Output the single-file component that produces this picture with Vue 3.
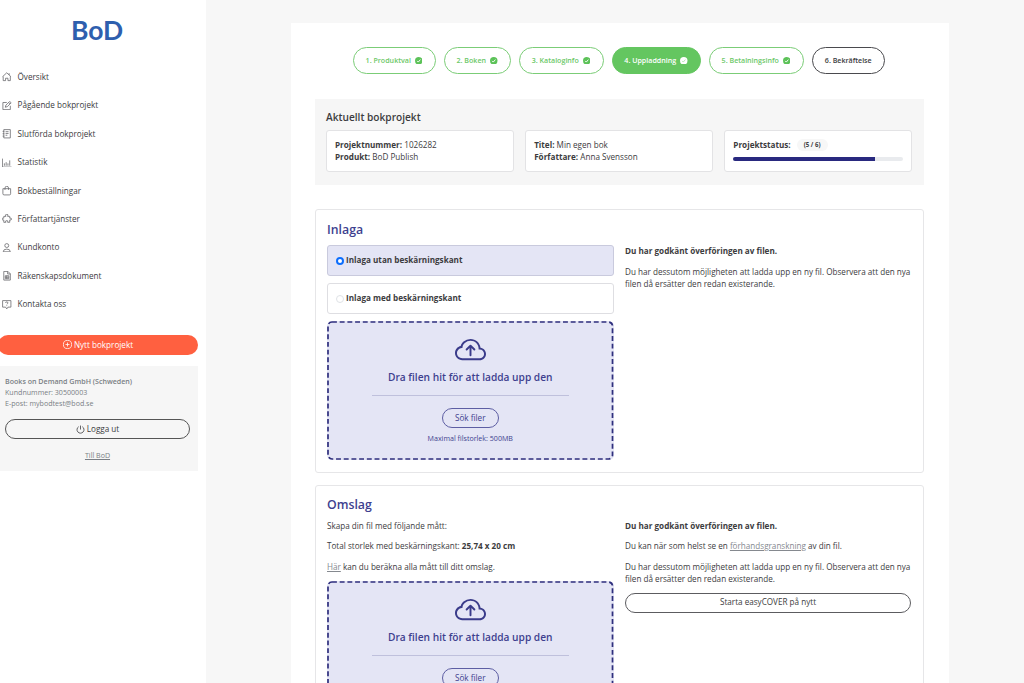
<script setup>
import { ref } from 'vue'

const menu = [
  { title: 'Översikt', icon: ['M2 7.5V14.5H6V10.5H10V14.5H14V7.5', 'M.8 8 8 1.3 15.2 8', 'M12 2v3'] },
  { title: 'Pågående bokprojekt', icon: ['M14 8v6.5H1.5V2.5H8', 'M5.5 10.5 6.5 7 13 .8 15.4 3 9 9.5Z', 'M11.3 2.5 13.7 5'] },
  { title: 'Slutförda bokprojekt', icon: ['M3 1h11v14H3Z', 'M1 4h3M1 8h3M1 12h3', 'M6 4.5h5M6 7.5h5M6 10.5h3'] },
  { title: 'Statistik', icon: ['M.7 1v14.3H16', 'M4 13V9M7 13V7M10 13V9M13 13V4'] },
  { title: 'Bokbeställningar', icon: ['M1.5 4.5h13V13q0 2-2 2h-9q-2 0-2-2Z', 'M5 6.5V3.5q0-3 3-3t3 3v3'] },
  { title: 'Författartjänster', icon: ['M3 4h3.5q-2-3.5 1.5-3.5T9.5 4H13v3q3-1 3 1.5T13 10v4H9.5q1.5-3-1.5-3t-1.5 3H3v-4Q0 11 0 8.5T3 7Z'] },
  { title: 'Kundkonto', icon: ['M8 1a3.3 3.3 0 1 1 0 6.6A3.3 3.3 0 1 1 8 1Z', 'M2 14.8q0-4.5 6-4.5t6 4.5Z'] },
  { title: 'Räkenskapsdokument', icon: ['M3 .7h7l4 4v10.6H3Z', 'M9.5 1v4H14', 'M5.5 8h6v5h-6ZM5.5 10.5h6M8 8v5'] },
  { title: 'Kontakta oss', icon: ['M1 1h14v11H10l-2 3-2-3H1Z', 'M6 5q0-1.8 2-1.8T10 5q0 1-2 2.2', 'M8 9v1.3'] }
]

const steps = [
  { title: '1. Produktval', state: 'done' },
  { title: '2. Boken', state: 'done' },
  { title: '3. Kataloginfo', state: 'done' },
  { title: '4. Uppladdning', state: 'active' },
  { title: '5. Betalningsinfo', state: 'done' },
  { title: '6. Bekräftelse', state: 'open' }
]

const sections = [
  { id: 'inlaga', title: 'Inlaga' },
  { id: 'omslag', title: 'Omslag' }
]

const trimOptions = [
  { value: 'utan', label: 'Inlaga utan beskärningskant' },
  { value: 'med', label: 'Inlaga med beskärningskant' }
]
const trim = ref('utan')
const progress = { current: 5, total: 6 }
</script>

<template>
  <div class="page">
    <aside class="sidebar">
      <div class="logo">BoD</div>

      <nav class="menu">
        <a v-for="item in menu" :key="item.title" class="menu-item">
          <svg class="menu-icon" viewBox="0 0 16 16">
            <path v-for="d in item.icon" :key="d" :d="d" />
          </svg>
          <span>{{ item.title }}</span>
        </a>
      </nav>

      <button class="new-btn">
        <svg viewBox="0 0 16 16"><circle cx="8" cy="8" r="7.3" /><path d="M8 4.5v7M4.5 8h7" /></svg>
        <span>Nytt bokprojekt</span>
      </button>

      <div class="account">
        <strong>Books on Demand GmbH (Schweden)</strong>
        <span>Kundnummer: 30500003</span>
        <span>E-post: mybodtest@bod.se</span>
        <button class="logout-btn">
          <svg viewBox="0 0 16 16"><path d="M8 1v7M4.8 3a6.2 6.2 0 1 0 6.4 0" /></svg>
          <span>Logga ut</span>
        </button>
        <a class="home-link">Till BoD</a>
      </div>
    </aside>

    <main class="content">
      <div class="steps">
        <div v-for="step in steps" :key="step.title" class="step" :class="step.state">
          <span>{{ step.title }}</span>
          <svg v-if="step.state !== 'open'" viewBox="0 0 16 16">
            <circle cx="8" cy="8" r="8" />
            <path d="M4.5 8.3 7 10.8 11.5 5.5" />
          </svg>
        </div>
      </div>

      <div class="project">
        <h3>Aktuellt bokprojekt</h3>
        <div class="project-cards">
          <div class="project-card">
            <div><b>Projektnummer:</b> 1026282</div>
            <div><b>Produkt:</b> BoD Publish</div>
          </div>
          <div class="project-card">
            <div><b>Titel:</b> Min egen bok</div>
            <div><b>Författare:</b> Anna Svensson</div>
          </div>
          <div class="project-card">
            <div class="status">
              <b>Projektstatus:</b>
              <span class="badge">({{ progress.current }} / {{ progress.total }})</span>
            </div>
            <div class="bar">
              <div class="bar-fill" :style="{ width: (progress.current / progress.total) * 100 + '%' }"></div>
            </div>
          </div>
        </div>
      </div>

      <section v-for="section in sections" :key="section.id" class="panel" :class="section.id">
        <div class="panel-left">
          <h2>{{ section.title }}</h2>

          <template v-if="section.id === 'inlaga'">
            <label
              v-for="option in trimOptions"
              :key="option.value"
              class="option"
              :class="{ selected: trim === option.value }"
            >
              <input v-model="trim" type="radio" :value="option.value" />
              <span>{{ option.label }}</span>
            </label>
          </template>
          <template v-else>
            <p>Skapa din fil med följande mått:</p>
            <p>Total storlek med beskärningskant: <b>25,74 x 20 cm</b></p>
            <p><a>Här</a> kan du beräkna alla mått till ditt omslag.</p>
          </template>

          <div class="upload">
            <svg class="outline"><rect x="1" y="1" width="284.5" height="137" rx="4" /></svg>
            <svg class="cloud" viewBox="0 0 16 16">
              <path d="M7.646 5.146a.5.5 0 0 1 .708 0l2 2a.5.5 0 0 1-.708.708L8.5 6.707V10.5a.5.5 0 0 1-1 0V6.707L6.354 7.854a.5.5 0 1 1-.708-.708l2-2z" />
              <path d="M4.406 3.342A5.53 5.53 0 0 1 8 2c2.69 0 4.923 2 5.166 4.579C14.758 6.804 16 8.137 16 9.773 16 11.569 14.502 13 12.687 13H3.781C1.708 13 0 11.366 0 9.318c0-1.763 1.266-3.223 2.942-3.593.143-.863.698-1.723 1.464-2.383zm.653.757c-.757.653-1.153 1.44-1.153 2.056v.448l-.445.049C2.064 6.805 1 7.952 1 9.318 1 10.785 2.23 12 3.781 12h8.906C13.98 12 15 10.988 15 9.773c0-1.216-1.02-2.228-2.313-2.228h-.5v-.5C12.188 4.825 10.328 3 8 3a4.53 4.53 0 0 0-2.941 1.1z" />
            </svg>
            <div class="upload-title">Dra filen hit för att ladda upp den</div>
            <div class="divider"></div>
            <button class="browse-btn">Sök filer</button>
            <div class="limit">Maximal filstorlek: 500MB</div>
          </div>
        </div>

        <div class="panel-right">
          <p><b>Du har godkänt överföringen av filen.</b></p>
          <p v-if="section.id === 'omslag'">Du kan när som helst se en <a>förhandsgranskning</a> av din fil.</p>
          <p>Du har dessutom möjligheten att ladda upp en ny fil. Observera att den nya<br />filen då ersätter den redan existerande.</p>
          <button v-if="section.id === 'omslag'" class="cover-btn">Starta easyCOVER på nytt</button>
        </div>
      </section>
    </main>
  </div>
</template>

<style>
body {
  margin: 0;
  overflow: hidden;
}
</style>

<style scoped>
* {
  box-sizing: border-box;
}

.page {
  display: flex;
  height: 683px;
  overflow: hidden;
  background: #f7f7f7;
  color: #3c3c3e;
  font-family: 'Open Sans', 'Liberation Sans', sans-serif;
  font-size: 8.13px;
  line-height: 12.4px;
  white-space: nowrap;
}

button {
  font: inherit;
  color: inherit;
  padding: 0;
  display: flex;
  align-items: center;
  justify-content: center;
}

svg {
  flex: none;
  fill: none;
  stroke: currentColor;
}

.sidebar {
  width: 206px;
  flex: none;
  background: #fff;
}

.logo {
  height: 63px;
  padding: 13px 0 0 71px;
  font-family: Lato, sans-serif;
  font-size: 26.5px;
  font-weight: 700;
  line-height: 34px;
  color: #2e5fae;
}

.menu-item {
  display: flex;
  align-items: center;
  gap: 6px;
  height: 28.4px;
  padding-left: 2px;
}

.menu-icon {
  width: 9.5px;
  height: 9.5px;
  stroke-width: 1.3;
  color: #66666a;
}

.new-btn {
  width: 200px;
  height: 20px;
  margin: 16.4px 0 11.5px -2px;
  border: none;
  border-radius: 10px;
  gap: 2px;
  background: #ff6040;
  color: #fff;
}

.new-btn svg,
.logout-btn svg {
  width: 9px;
  height: 9px;
  stroke-width: 1.4;
}

.account {
  display: flex;
  flex-direction: column;
  width: 198px;
  height: 104.5px;
  padding: 10px 8px 0 5px;
  background: #f6f6f6;
  color: #7a7f85;
  font-size: 7.1px;
  line-height: 10.8px;
}

.account strong {
  font-weight: 600;
}

.logout-btn {
  width: 185px;
  height: 20px;
  flex: none;
  margin-top: 10.5px;
  border: 1px solid #555;
  border-radius: 10px;
  gap: 2px;
  background: transparent;
  color: #3c3c3e;
  font-size: 8.13px;
}

.home-link {
  align-self: center;
  margin-top: 11px;
  text-decoration: underline;
}

.content {
  width: 658px;
  height: 1000px;
  flex: none;
  margin: 23px 0 0 85px;
  padding: 24px 25px 0 23.5px;
  background: #fff;
}

.steps {
  display: grid;
  grid-template-columns: 83px 67px 85px 89px 95px 73.5px;
  gap: 8px;
  justify-content: center;
  height: 27px;
  margin-right: 1px;
}

.step {
  display: flex;
  align-items: center;
  justify-content: center;
  gap: 4px;
  border: 1px solid #7bcd77;
  border-radius: 14px;
  color: #6cc868;
  font-size: 7.1px;
  font-weight: 600;
}

.step svg {
  width: 7.5px;
  height: 7.5px;
}

.step circle {
  fill: #5cc258;
  stroke: none;
}

.step path {
  stroke: #fff;
  stroke-width: 2;
}

.step.active {
  background: #64c660;
  border-color: #64c660;
  color: #fff;
}

.step.active circle {
  fill: #fff;
}

.step.active path {
  stroke: #b5e3b3;
}

.step.open {
  border-color: #4a4a4e;
  color: #3c3c3e;
}

.project {
  height: 86.5px;
  margin: 24.5px 0 24px;
  padding: 11px 12px 0 11.5px;
  background: #f6f6f6;
}

.project h3 {
  margin: 0 0 6px;
  font-size: 10.15px;
  font-weight: 600;
  line-height: 14px;
}

.project-cards {
  display: grid;
  grid-template-columns: repeat(3, 1fr);
  gap: 11.5px;
}

.project-card {
  height: 42.5px;
  padding: 8.5px 8px 0;
  border: 1px solid #e3e3e5;
  border-radius: 3px;
  background: #fff;
}

.status {
  display: flex;
  align-items: center;
  gap: 6px;
}

.badge {
  padding: 0 7px;
  border-radius: 7px;
  background: #f7f7f7;
  font-size: 6.1px;
  font-weight: 700;
}

.bar {
  height: 4px;
  margin-top: 6px;
  border-radius: 2px;
  overflow: hidden;
  background: #e9ebee;
}

.bar-fill {
  height: 4px;
  background: #29297f;
}

.panel {
  display: grid;
  grid-template-columns: 286.5px 286px;
  column-gap: 11.5px;
  height: 263.5px;
  margin-bottom: 12px;
  padding: 11px 0 0 11.5px;
  border: 1px solid #e6e6e8;
  border-radius: 3px;
}

.panel h2 {
  margin: 0 0 7px;
  font-size: 12.3px;
  font-weight: 600;
  line-height: 17px;
  color: #3e3f8f;
}

.panel p {
  margin: 0 0 8.2px;
}

.panel a {
  color: #85898f;
  text-decoration: underline;
}

.option {
  display: flex;
  align-items: center;
  height: 31px;
  margin-bottom: 7px;
  padding-left: 7.5px;
  border: 1px solid #dedee2;
  border-radius: 3px;
  font-weight: 700;
}

.option.selected {
  background: #e4e5f5;
  border-color: #c9cadd;
}

.option input {
  appearance: none;
  width: 8px;
  height: 8px;
  margin: 0 2.5px 0 0;
  border: 1px solid #dfe2e6;
  border-radius: 50%;
  background: #fff;
}

.option input:checked {
  border: 2.5px solid #0d6efd;
}

.upload {
  position: relative;
  display: flex;
  flex-direction: column;
  align-items: center;
  height: 139px;
  border-radius: 5px;
  background: #e4e5f5;
  color: #3e3f8f;
}

.outline {
  position: absolute;
  inset: 0;
  width: 100%;
  height: 100%;
  stroke: #2f2f7d;
  stroke-width: 1.7;
  stroke-dasharray: 4.9 2.8;
}

.cloud {
  width: 31px;
  height: 31px;
  margin-top: 14px;
  fill: #3a3b8a;
  stroke: none;
}

.upload-title {
  margin-top: 4px;
  font-size: 10.18px;
  font-weight: 600;
  line-height: 14px;
}

.divider {
  width: 197px;
  height: 1px;
  margin: 11px 0 12px;
  background: #bfc0dc;
}

.browse-btn {
  width: 57px;
  height: 20px;
  border: 1px solid #5d5ea3;
  border-radius: 10px;
  background: transparent;
}

.limit {
  margin-top: 4px;
  font-size: 7.1px;
}

.panel-right {
  padding-top: 24px;
}

.omslag {
  padding-top: 10px;
}

.cover-btn {
  width: 286px;
  height: 20px;
  margin-top: -1px;
  border: 1px solid #5c5c60;
  border-radius: 10px;
  background: #fff;
}
</style>
